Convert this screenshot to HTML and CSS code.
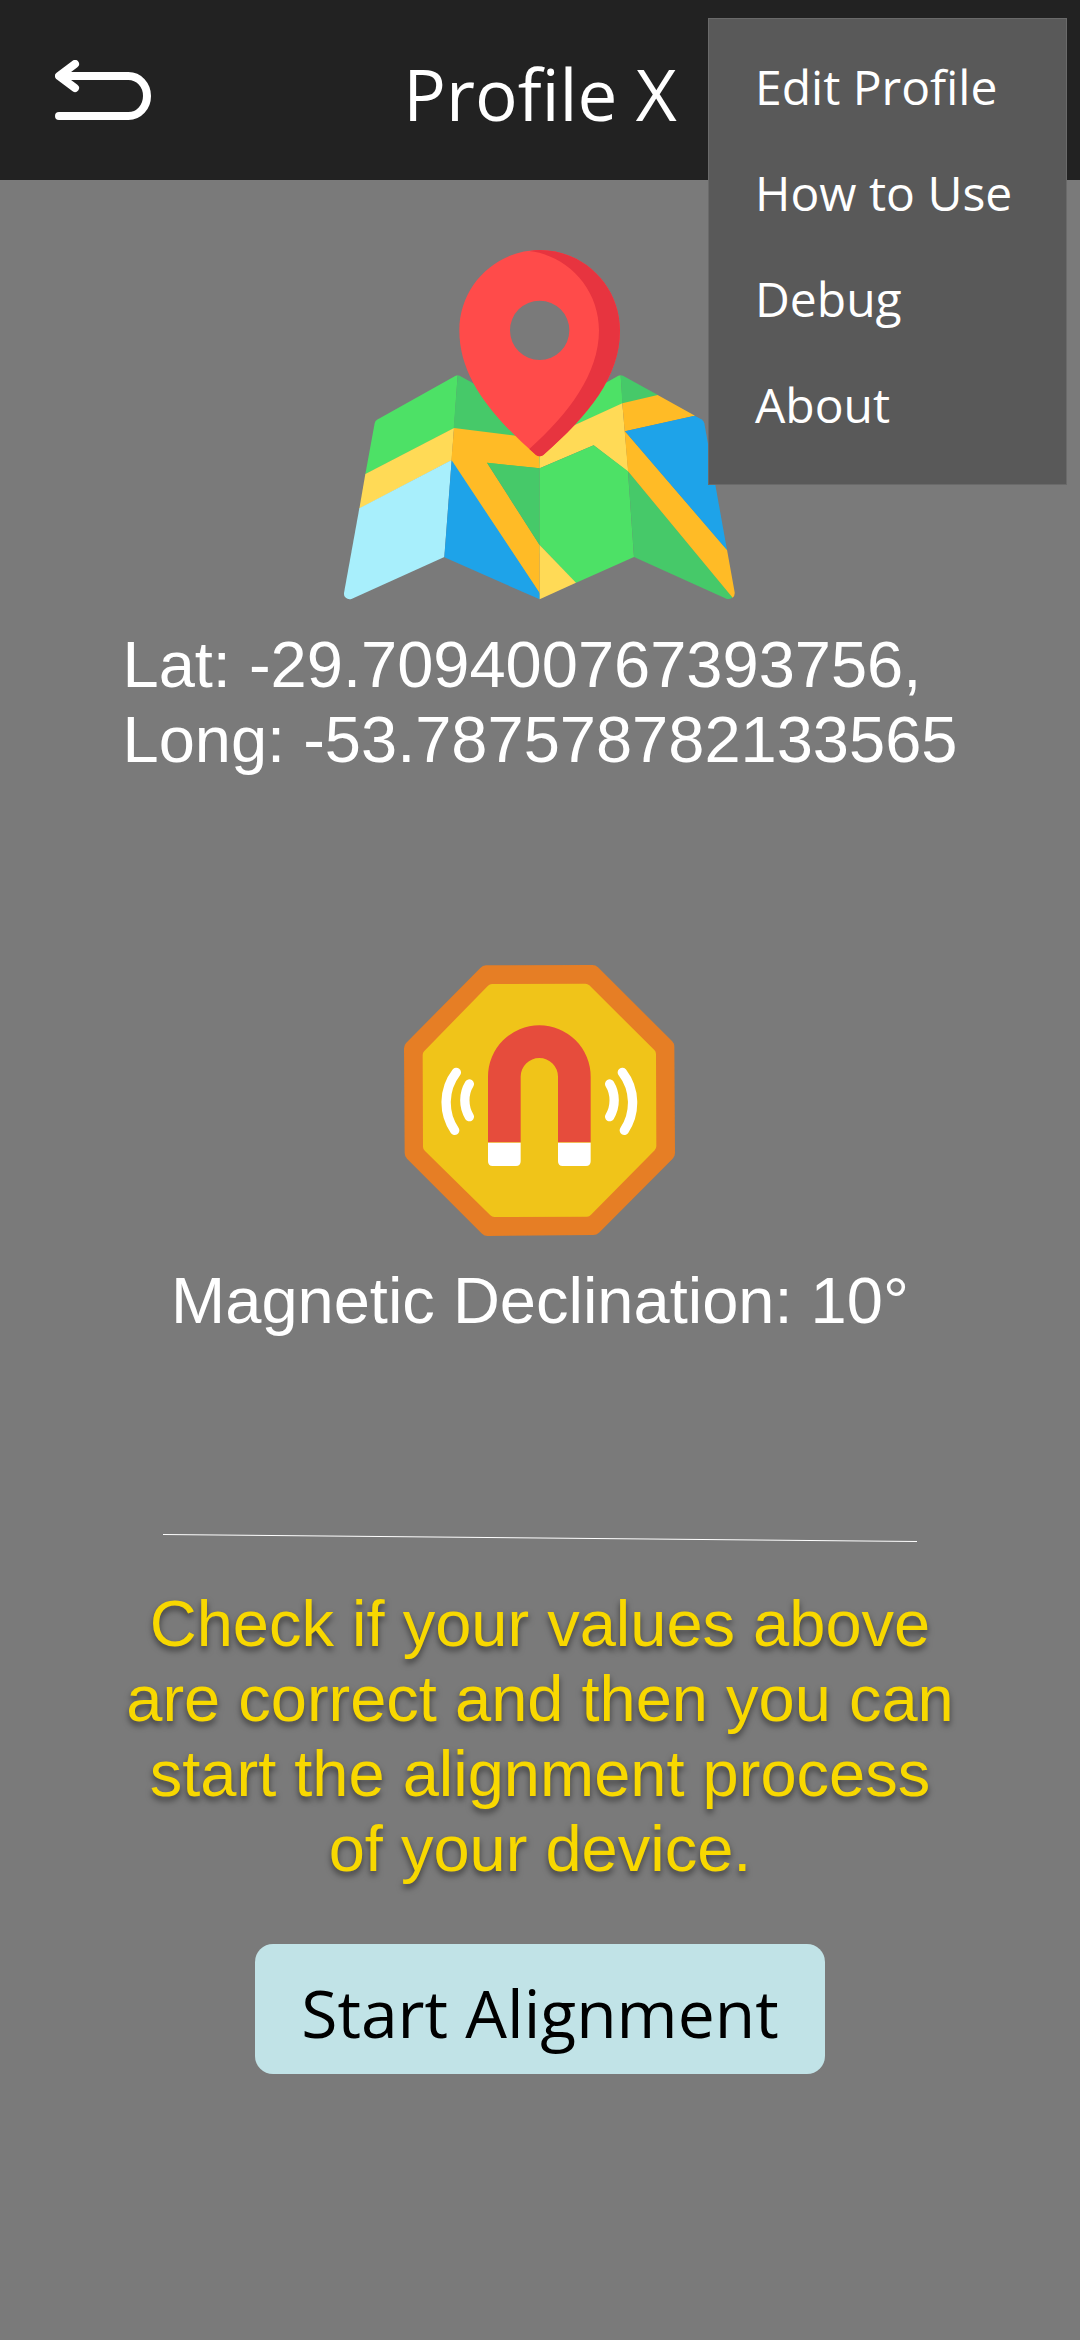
FILE: index.html
```html
<!DOCTYPE html>
<html lang="en">
<head>
<meta charset="utf-8">
<meta name="viewport" content="width=device-width, initial-scale=1">
<title>Profile X</title>
<link rel="stylesheet" href="styles.css">
</head>
<body>
<header class="topbar">
  <button class="back" type="button" aria-label="Back">
    <svg width="96" height="60" viewBox="165 180 288 180" fill="none" stroke="#fff" stroke-width="24" stroke-linecap="round" stroke-linejoin="round" aria-hidden="true">
      <path d="M225 192 177 228 225 264M190 228H385C417 228 441 255 441 288S417 348 385 348H177"/>
    </svg>
  </button>
  <h1 class="title">Profile X</h1>
</header>

<nav class="menu" aria-label="Options">
  <a class="menu-item" href="#edit">Edit Profile</a>
  <a class="menu-item" href="#help">How to Use</a>
  <a class="menu-item" href="#debug">Debug</a>
  <a class="menu-item" href="#about">About</a>
</nav>

<main class="content">
  <section class="reading location">
    <svg width="391" height="350" viewBox="75 59 1173 1050" aria-hidden="true">
      <path fill="#4de166" d="M416 435 410 436 174 568Q168 571 167 579L139 732 405 594Z"/>
      <path fill="#ffda56" d="M139 731 405 593 398 690 121 835Z"/>
      <path fill="#a8effc" d="M121 834 398 689 376 980 99 1105C87 1110 74 1102 75 1088Z"/>
      <path fill="#46c969" d="M416 435 422 436 662 570V714L500 700 662 946V970L404 594Z"/>
      <path fill="#ffbb26" d="M405 593 662 625V714L504 697 662 944V1090L397 692Z"/>
      <path fill="#46c969" d="M504 697 662 714V945Z"/>
      <path fill="#1ea3e9" d="M398 690 662 1088V1107L376 981Z"/>
      <path fill="#4de166" d="M662 570 898 436 905 435 911 520 700 615 662 700Z"/>
      <path fill="#ffda56" d="M662 632 910 519 928 725 824 645 662 714Z"/>
      <path fill="#4de166" d="M662 714 824 645 927 723 945 980 770 1058 662 944Z"/>
      <path fill="#ffda56" d="M662 944 771 1057 662 1107Z"/>
      <path fill="#46c969" d="M905 435 912 436 1018 495 910 520ZM927 722 1241 1101Q1234 1109 1222 1105L945 980Z"/>
      <path fill="#ffbb26" d="M910 519 1016 494 1128 556 918 603 1224 958 1247 1086Q1248 1096 1241 1102L927 723Z"/>
      <path fill="#1ea3e9" d="M918 603 1127 556 1147 567Q1154 571 1156 579L1224 959Z"/>
      <path fill="#ff4b4a" fill-rule="evenodd" d="M662 59C529 59 421 167 421 300C421 440 515 555 651 674Q662 682 673 674C809 555 903 440 903 300C903 167 795 59 662 59ZM662 211A89 89 0 1 1 662 389A89 89 0 1 1 662 211Z"/>
      <path fill="#e7343f" d="M662 59C652 59 641 60 631 62C749 76 840 178 840 300C840 430 750 550 631 656L651 674Q662 682 673 674C809 555 903 440 903 300C903 167 795 59 662 59Z"/>
    </svg>
    <p class="value coordinates">Lat: -29.709400767393756,<br>Long: -53.787578782133565</p>
  </section>

  <section class="reading">
    <svg width="271" height="271" viewBox="75 75 813 813" aria-hidden="true">
      <path fill="#e67e25" d="M321 76 640 75Q650 75 657 82L879 303Q886 310 886 320L888 639Q888 649 881 656L660 878Q653 885 643 885L326 888Q316 888 309 881L84 656Q77 649 77 639L75 325Q75 315 82 308L304 84Q311 76 321 76Z"/>
      <path fill="#f0c419" d="M339 132 619 131Q626 131 631 136L826 330Q831 335 831 342L832 619Q832 626 827 631L636 824Q631 830 624 830L346 831Q339 831 334 826L138 633Q132 628 132 621L131 345Q131 338 136 333L327 137Q332 132 339 132Z"/>
      <path fill="#e64c3c" d="M327 607V410A154 154 0 0 1 635 410V607H537V410A56 56 0 0 0 425 410V607Z"/>
      <path fill="#fff" d="M327 608H425V664Q425 678 411 678H341Q327 678 327 664ZM537 608H635V664Q635 678 621 678H551Q537 678 537 664Z"/>
      <path fill="none" stroke="#fff" stroke-width="28" stroke-linecap="round" d="M232 397C192 449 192 520 227 571M271 432C253 461 253 501 271 530M730 397C770 449 770 520 736 571M692 432C710 461 710 501 692 530"/>
    </svg>
    <p class="value">Magnetic Declination: 10°</p>
  </section>

  <svg class="divider" width="754" height="8" viewBox="0 0 754 8" aria-hidden="true">
    <path d="M0 .5 754 7.5" stroke="#fff"/>
  </svg>

  <p class="value notice">Check if your values above are correct and then you can start the alignment process of your device.</p>
  <button class="start" type="button">Start Alignment</button>
</main>
</body>
</html>
```
FILE: styles.css
```css
* {
  box-sizing: border-box;
}

body {
  margin: 0;
  min-height: 100vh;
  background: #7a7a7a;
  color: #fff;
  font-family: "Liberation Sans", Arial, sans-serif;
}

.topbar {
  display: grid;
  grid-template-columns: 1fr auto 1fr;
  align-items: center;
  height: 180px;
  padding: 0 55px;
  background: #222;
}

.back {
  justify-self: start;
  padding: 0;
  border: 0;
  background: none;
}

.back svg {
  display: block;
}

.title {
  margin: 0;
  padding-top: 8px;
  font: 400 71px/96px "Open Sans", "Noto Sans", sans-serif;
}

.menu {
  position: absolute;
  top: 18px;
  right: 13px;
  display: flex;
  flex-direction: column;
  width: 359px;
  padding: 15px 0 26px;
  border: 1px solid #6a6a6a;
  background: #595959;
}

.menu-item {
  padding: 0 46px;
  color: #fff;
  font: 400 48px/106px "Open Sans", "Noto Sans", sans-serif;
  text-decoration: none;
  white-space: nowrap;
}

.content {
  display: flex;
  flex-direction: column;
  align-items: center;
  padding: 70px 0;
}

.reading {
  display: flex;
  flex-direction: column;
  align-items: center;
  gap: 27px;
}

.location {
  margin-bottom: 188px;
}

.value {
  margin: 0;
  font-size: 65px;
  line-height: 75px;
}

.divider {
  margin: 196px 0 44px;
}

.notice {
  max-width: 840px;
  color: #f8d800;
  text-align: center;
  text-shadow: 0 4px 6px rgba(0, 0, 0, 0.5);
}

.start {
  margin-top: 58px;
  padding: 20px 46px 14px;
  border: 0;
  border-radius: 18px;
  background: #c1e3e7;
  color: #000;
  font: 400 66px/96px "Open Sans", "Noto Sans", sans-serif;
}
```
